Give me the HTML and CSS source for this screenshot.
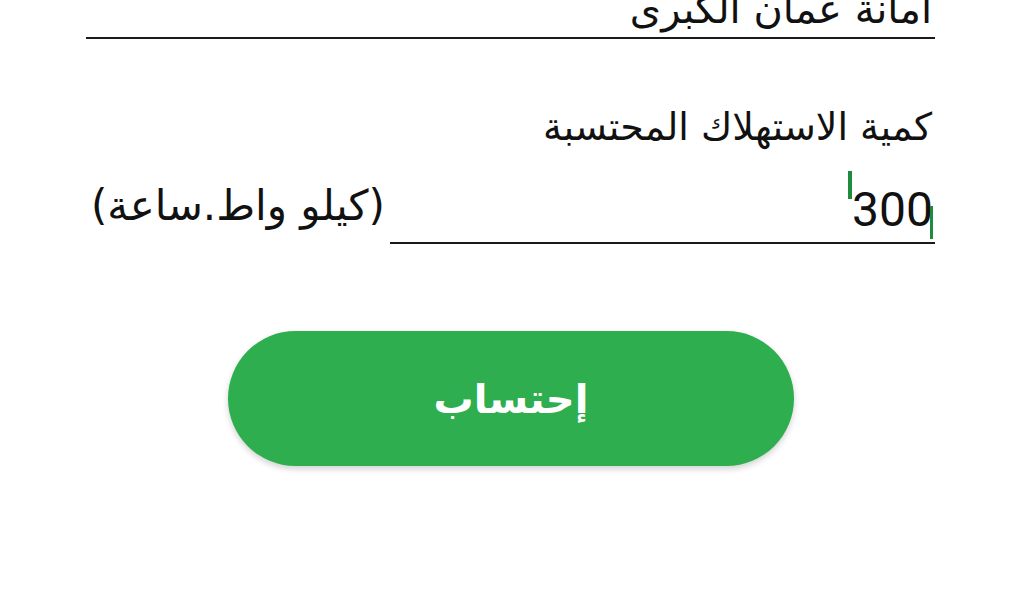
FILE: index.html
```html
<!DOCTYPE html>
<html lang="ar" dir="rtl">
<head>
<meta charset="utf-8">
<link rel="stylesheet" href="styles.css">
</head>
<body>
<div class="form">
  <div class="field-top">أمانة عمان الكبرى</div>
  <div class="label">كمية الاستهلاك المحتسبة</div>
  <div class="row">
    <div class="input">
      <span class="value">300<span class="handle handle-start"></span><span class="handle handle-end"></span></span>
    </div>
    <div class="unit">(كيلو واط.ساعة)</div>
  </div>
  <div class="actions">
    <button class="btn">إحتساب</button>
  </div>
</div>
</body>
</html>
```
FILE: styles.css
```css
html, body {
  margin: 0;
  padding: 0;
  background: #ffffff;
}
body {
  width: 1020px;
  height: 600px;
  overflow: hidden;
  font-family: "DejaVu Sans", sans-serif;
  color: #111;
}
.form {
  display: flex;
  flex-direction: column;
  padding: 0 85px 0 86px;
  margin-top: -16px;
}
.field-top {
  font-size: 40px;
  line-height: 50px;
  padding-right: 3px;
  padding-bottom: 3px;
  border-bottom: 2px solid #1a1a1a;
}
.label {
  margin-top: 64px;
  font-size: 38px;
  line-height: 48px;
  padding-right: 3px;
}
.row {
  display: flex;
  flex-direction: row;
  align-items: flex-start;
  margin-top: 16px;
}
.input {
  width: 545px;
  height: 75px;
  direction: ltr;
  display: flex;
  justify-content: flex-end;
  align-items: flex-start;
  border-bottom: 2px solid #1a1a1a;
}
.value {
  position: relative;
  margin-top: 19px;
  margin-right: 2px;
  font-family: Roboto, "Liberation Sans", sans-serif;
  font-size: 48px;
  line-height: 48px;
  color: #111;
}
.handle {
  position: absolute;
  width: 4px;
  background: #1e8c3c;
}
.handle-start {
  left: -4px;
  top: -15px;
  height: 28px;
}
.handle-end {
  right: 0;
  top: 20px;
  height: 33px;
  width: 3px;
}
.unit {
  font-size: 42px;
  line-height: 60px;
  margin-top: 9px;
  margin-right: 5px;
}
.actions {
  display: flex;
  justify-content: center;
  margin-top: 87px;
  padding-left: 1px;
}
.btn {
  width: 566px;
  height: 135px;
  border: none;
  border-radius: 68px;
  background: #2eae4e;
  color: #fff;
  font-family: "DejaVu Sans", sans-serif;
  font-weight: bold;
  font-size: 40px;
  box-shadow: 0 3px 6px rgba(0,0,0,0.18);
}
```
